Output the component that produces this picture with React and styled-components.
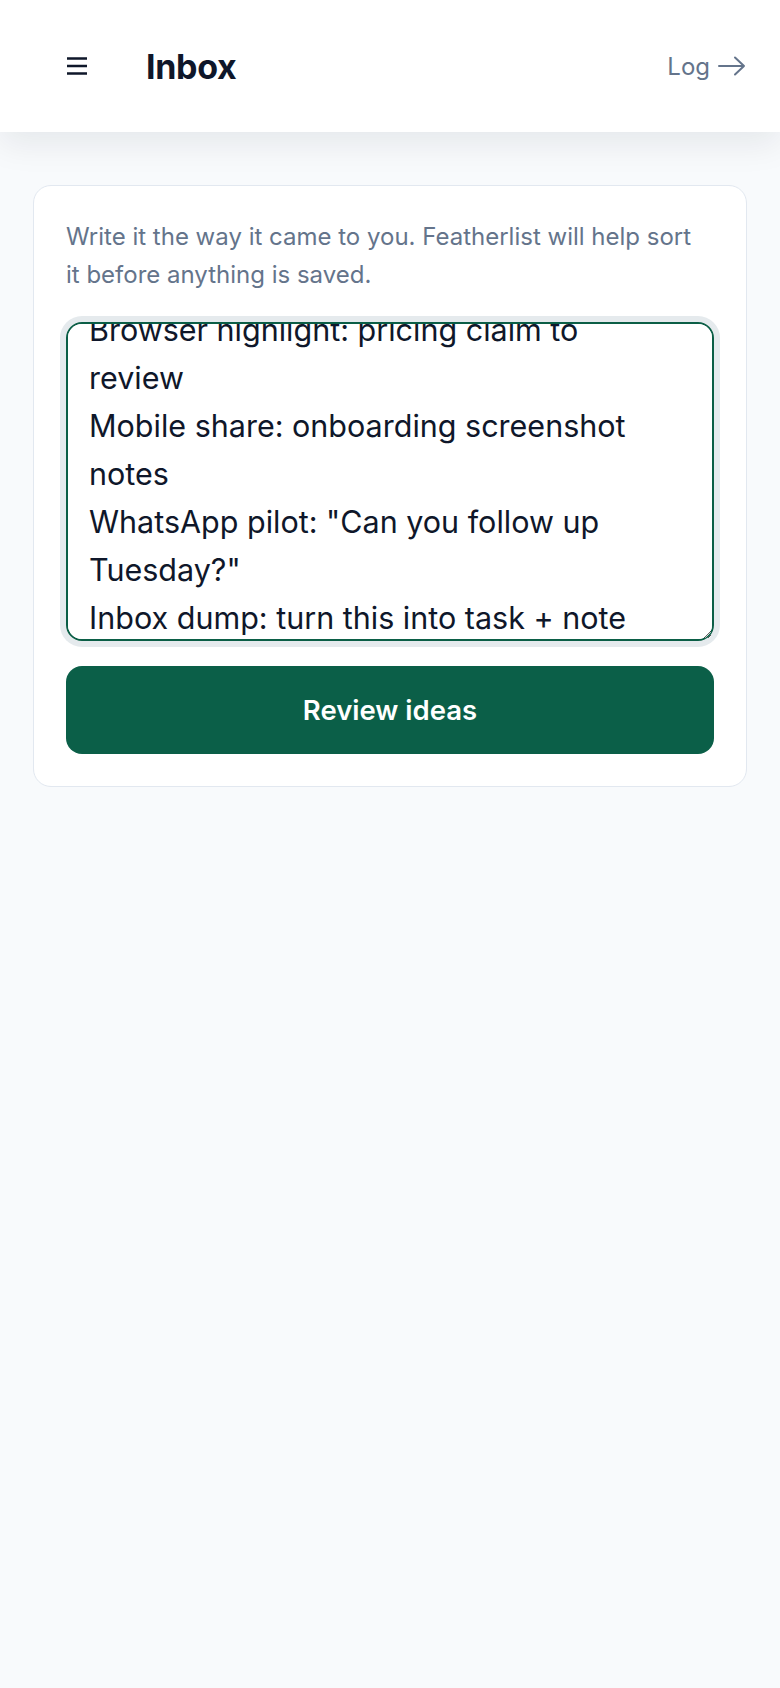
import React, { useEffect, useRef, useState } from 'react'
import styled, { createGlobalStyle } from 'styled-components'

const GlobalStyle = createGlobalStyle`
  * { box-sizing: border-box; }
  html, body { margin: 0; background: #f8fafc; }
  body { font-family: Inter, "Noto Sans", sans-serif; color: #0f172a; min-height: 1688px; }
`

const Header = styled.header`
  height: 132px;
  background: #fff;
  box-shadow: 0 12px 32px rgba(15, 23, 42, 0.08);
  display: flex;
  align-items: center;
  padding: 0 34px 0 67px;
`

const MenuButton = styled.button`
  border: none;
  background: none;
  padding: 0;
  width: 20px;
  height: 20px;
  color: #0f172a;
  display: flex;
  align-items: center;
  justify-content: center;
`

const Title = styled.h1`
  margin: 0 0 0 59px;
  font-size: 34px;
  font-weight: 700;
  color: #0f172a;
  letter-spacing: -0.3px;
`

const LogLink = styled.a`
  margin-left: auto;
  display: flex;
  align-items: center;
  gap: 8px;
  font-size: 24px;
  color: #64748b;
  text-decoration: none;
`

const Main = styled.main`
  padding: 53px 33px;
`

const Card = styled.section`
  background: #fff;
  border: 1px solid #e2e8f0;
  border-radius: 18px;
  padding: 32px;
  display: flex;
  flex-direction: column;
`

const Hint = styled.p`
  margin: 0 0 28px;
  padding-right: 12px;
  font-size: 24px;
  line-height: 38px;
  color: #64748b;
`

const Capture = styled.textarea`
  display: block;
  width: 100%;
  height: 319px;
  border: 2px solid #0b5e46;
  border-radius: 16px;
  padding: 16px 50px 16px 21px;
  font-family: Inter, "Noto Sans", sans-serif;
  font-size: 30.5px;
  line-height: 48px;
  color: #0f172a;
  box-shadow: 0 0 0 6px #e5eaed;
  outline: none;
  resize: vertical;
  scrollbar-width: none;
`

const ReviewButton = styled.button`
  margin-top: 25px;
  height: 88px;
  border: none;
  border-radius: 16px;
  background: #0b5f48;
  color: #fff;
  font-family: Inter, "Noto Sans", sans-serif;
  font-size: 27.5px;
  font-weight: 600;
`

const ideas = [
  'Browser highlight: pricing claim to review',
  'Mobile share: onboarding screenshot notes',
  'WhatsApp pilot: "Can you follow up Tuesday?"',
  'Inbox dump: turn this into task + note',
].join('\n')

function MenuIcon() {
  return (
    <svg width="20" height="18" viewBox="0 0 20 18" fill="none" stroke="currentColor" strokeWidth="2.5">
      <path d="M0 1.5h20M0 9h20M0 16.5h20" />
    </svg>
  )
}

function ArrowIcon() {
  return (
    <svg width="28" height="20" viewBox="0 0 28 20" fill="none" stroke="currentColor" strokeWidth="2" strokeLinecap="round" strokeLinejoin="round">
      <path d="M1 10h25M17 1.5l9 8.5-9 8.5" />
    </svg>
  )
}

export default function App() {
  const areaRef = useRef(null)
  const [text, setText] = useState(ideas)

  useEffect(() => {
    const scroll = () => {
      if (areaRef.current) areaRef.current.scrollTop = 34
    }
    scroll()
    document.fonts.ready.then(scroll)
  }, [])

  return (
    <>
      <GlobalStyle />
      <Header>
        <MenuButton aria-label="Menu"><MenuIcon /></MenuButton>
        <Title>Inbox</Title>
        <LogLink href="#">Log <ArrowIcon /></LogLink>
      </Header>
      <Main>
        <Card>
          <Hint>Write it the way it came to you. Featherlist will help sort it before anything is saved.</Hint>
          <Capture ref={areaRef} value={text} onChange={(e) => setText(e.target.value)} />
          <ReviewButton type="button">Review ideas</ReviewButton>
        </Card>
      </Main>
    </>
  )
}
